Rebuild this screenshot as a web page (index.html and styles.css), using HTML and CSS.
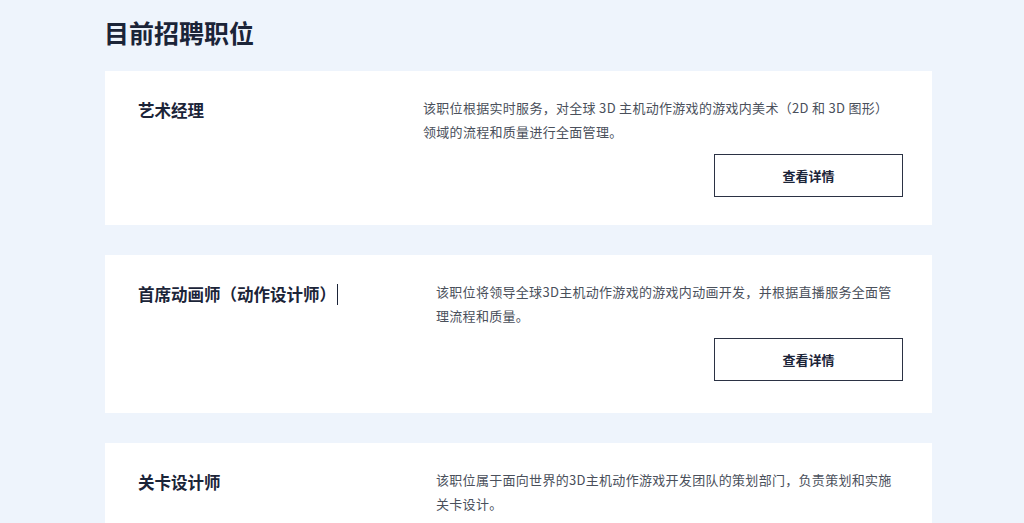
FILE: index.html
```html
<!DOCTYPE html>
<html lang="zh-CN">
<head>
    <meta charset="UTF-8">
    <meta name="viewport" content="width=device-width, initial-scale=1.0">
    <title>目前招聘职位</title>
    <link rel="stylesheet" href="styles.css">
</head>
<body>
    <div class="jobs">
        <h1>目前招聘职位</h1>

        <div class="job-card">
            <h2 class="job-title">艺术经理</h2>
            <div class="job-body">
                <p class="job-desc">该职位根据实时服务，对全球 3D 主机动作游戏的游戏内美术（2D 和 3D 图形）领域的流程和质量进行全面管理。</p>
                <button class="detail-btn">查看详情</button>
            </div>
        </div>

        <div class="job-card tall">
            <h2 class="job-title">首席动画师（动作设计师）<span class="caret"></span></h2>
            <div class="job-body shifted">
                <p class="job-desc">该职位将领导全球3D主机动作游戏的游戏内动画开发，并根据直播服务全面管理流程和质量。</p>
                <button class="detail-btn">查看详情</button>
            </div>
        </div>

        <div class="job-card">
            <h2 class="job-title">关卡设计师</h2>
            <div class="job-body shifted">
                <p class="job-desc">该职位属于面向世界的3D主机动作游戏开发团队的策划部门，负责策划和实施关卡设计。</p>
                <button class="detail-btn">查看详情</button>
            </div>
        </div>
    </div>
</body>
</html>
```

FILE: styles.css
```css
body {
    margin: 0;
    background-color: #eef4fc;
    font-family: "Noto Sans CJK SC", "Noto Sans", sans-serif;
    color: #1b2438;
}
.jobs {
    width: 827px;
    margin-left: 105px;
    padding-top: 14px;
}
h1 {
    font-size: 25px;
    font-weight: 700;
    line-height: 36px;
    margin: 0 0 21px -1px;
}
.job-card {
    background-color: #fff;
    display: flex;
    align-items: flex-start;
    padding: 25px 29px 28px 33px;
    margin-bottom: 30px;
}
.job-card.tall {
    padding-bottom: 32px;
}
.job-title {
    font-size: 16.5px;
    font-weight: 700;
    line-height: 28px;
    margin: 0;
    width: 285px;
    display: flex;
    align-items: center;
}
.caret {
    display: inline-block;
    width: 1px;
    height: 21px;
    background-color: #1b2438;
    margin-left: 1px;
}
.job-body {
    flex: 1;
    display: flex;
    flex-direction: column;
    align-items: flex-end;
}
.job-body.shifted {
    padding-left: 13px;
}
.job-desc {
    align-self: stretch;
    font-size: 13px;
    letter-spacing: 0.3px;
    line-height: 24px;
    color: #4a505b;
    margin: 0 0 10px;
    padding-right: 10px;
}
.detail-btn {
    width: 189px;
    height: 43px;
    background-color: #fff;
    border: 1px solid #2b3244;
    font-family: inherit;
    font-size: 13px;
    font-weight: 700;
    color: #1b2438;
    cursor: pointer;
}
.detail-btn:hover {
    background-color: #f4f7fc;
}
```
